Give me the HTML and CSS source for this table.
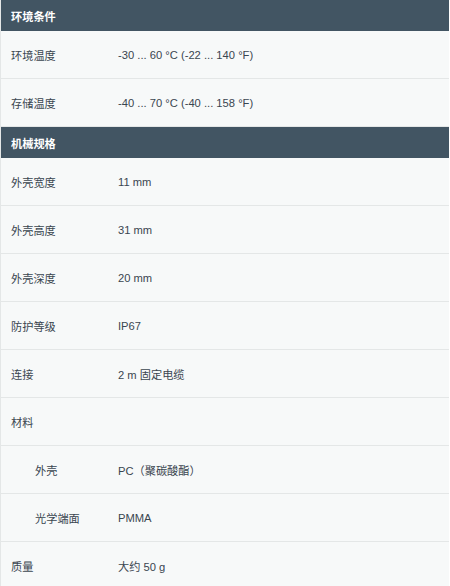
FILE: index.html
```html
<!DOCTYPE html>
<html lang="zh">
<head>
<meta charset="utf-8">
<link rel="stylesheet" href="styles.css">
</head>
<body>
<div class="spec">
  <div class="head">环境条件</div>
  <div class="row"><div class="label">环境温度</div><div class="value">-30 ... 60 °C (-22 ... 140 °F)</div></div>
  <div class="row"><div class="label">存储温度</div><div class="value">-40 ... 70 °C (-40 ... 158 °F)</div></div>
  <div class="head">机械规格</div>
  <div class="row"><div class="label">外壳宽度</div><div class="value">11 mm</div></div>
  <div class="row"><div class="label">外壳高度</div><div class="value">31 mm</div></div>
  <div class="row"><div class="label">外壳深度</div><div class="value">20 mm</div></div>
  <div class="row"><div class="label">防护等级</div><div class="value">IP67</div></div>
  <div class="row"><div class="label">连接</div><div class="value">2 m 固定电缆</div></div>
  <div class="row"><div class="label">材料</div><div class="value"></div></div>
  <div class="row"><div class="label sub">外壳</div><div class="value">PC（聚碳酸酯）</div></div>
  <div class="row"><div class="label sub">光学端面</div><div class="value">PMMA</div></div>
  <div class="row"><div class="label">质量</div><div class="value">大约 50 g</div></div>
</div>
</body>
</html>
```
FILE: styles.css
```css
html, body {
  margin: 0;
  padding: 0;
  background: #ffffff;
}
.spec {
  width: 449px;
  border-left: 1px solid #e4e7e7;
  box-sizing: border-box;
  font-family: "Liberation Sans", Arial, "Noto Sans CJK SC", sans-serif;
  font-size: 11.2px;
  color: #3a4650;
}
.head {
  height: 31px;
  display: flex;
  align-items: center;
  padding-left: 10px;
  background: #425563;
  color: #ffffff;
  font-weight: bold;
}
.row {
  display: grid;
  grid-template-columns: 107px 1fr;
  height: 47px;
  align-items: center;
  background: #f7f9f9;
  border-bottom: 1px solid #e4e7e7;
  padding-left: 10px;
}
.label.sub { padding-left: 24px; }
```
